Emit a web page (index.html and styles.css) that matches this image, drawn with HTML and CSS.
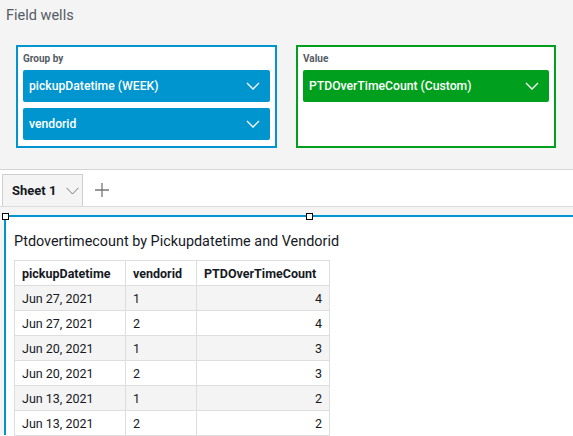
FILE: index.html
```html
<!DOCTYPE html>
<html>
<head>
<meta charset="utf-8">
<link rel="stylesheet" href="styles.css">
</head>
<body>
<div class="wells">
  <div class="wells-title">Field wells</div>
  <div class="wells-row">
    <div class="well well-blue">
      <div class="well-label">Group by</div>
      <div class="pill pill-blue"><span>pickupDatetime (WEEK)</span><svg class="chev" width="14" height="8" viewBox="0 0 14 8"><path d="M1 1 L7 7 L13 1" fill="none" stroke="#fff" stroke-width="1.3"/></svg></div>
      <div class="pill pill-blue"><span>vendorid</span><svg class="chev" width="14" height="8" viewBox="0 0 14 8"><path d="M1 1 L7 7 L13 1" fill="none" stroke="#fff" stroke-width="1.3"/></svg></div>
    </div>
    <div class="well well-green">
      <div class="well-label">Value</div>
      <div class="pill pill-green"><span>PTDOverTimeCount (Custom)</span><svg class="chev" width="14" height="8" viewBox="0 0 14 8"><path d="M1 1 L7 7 L13 1" fill="none" stroke="#fff" stroke-width="1.3"/></svg></div>
    </div>
  </div>
</div>
<div class="tabbar">
  <div class="tab"><span>Sheet 1</span><svg class="tab-chev" width="13" height="8" viewBox="0 0 13 8"><path d="M0.5 0.8 L6.5 7 L12.5 0.8" fill="none" stroke="#777" stroke-width="1"/></svg></div>
  <svg class="plus" width="14" height="14" viewBox="0 0 14 14"><path d="M7 0 V14 M0 7 H14" stroke="#777" stroke-width="1.3"/></svg>
</div>
<div class="canvas">
  <div class="visual">
    <span class="handle handle-l"></span>
    <span class="handle handle-m"></span>
    <div class="visual-title">Ptdovertimecount by Pickupdatetime and Vendorid</div>
    <table class="grid">
      <colgroup><col class="c1"><col class="c2"><col class="c3"></colgroup>
      <thead>
        <tr><th>pickupDatetime</th><th>vendorid</th><th>PTDOverTimeCount</th></tr>
      </thead>
      <tbody>
        <tr><td>Jun 27, 2021</td><td>1</td><td class="num">4</td></tr>
        <tr><td>Jun 27, 2021</td><td>2</td><td class="num">4</td></tr>
        <tr><td>Jun 20, 2021</td><td>1</td><td class="num">3</td></tr>
        <tr><td>Jun 20, 2021</td><td>2</td><td class="num">3</td></tr>
        <tr><td>Jun 13, 2021</td><td>1</td><td class="num">2</td></tr>
        <tr><td>Jun 13, 2021</td><td>2</td><td class="num">2</td></tr>
      </tbody>
    </table>
  </div>
</div>
</body>
</html>
```
FILE: styles.css
```css
* { box-sizing: border-box; }
html, body {
  margin: 0;
  padding: 0;
  width: 573px;
  height: 436px;
  overflow: hidden;
  background: #fff;
  font-family: Roboto, "Noto Sans", sans-serif;
  color: #16191f;
}
.wells {
  background: #f4f4f4;
  height: 170px;
  border-bottom: 1px solid #d5d5d5;
  padding-top: 5px;
}
.wells-title {
  font-size: 14.5px;
  line-height: 22px;
  color: #545b64;
  padding-left: 6px;
}
.wells-row {
  display: flex;
  gap: 19px;
  padding-left: 16px;
  margin-top: 18px;
}
.well {
  width: 261px;
  height: 103px;
  background: #fff;
  border: 2px solid;
  padding: 5px;
  display: flex;
  flex-direction: column;
  gap: 6px;
}
.well-green { width: 260px; border-color: #00a01e; }
.well-blue { border-color: #0095cf; }
.well-label {
  font-size: 10px;
  font-weight: 700;
  line-height: 13px;
  color: #545b64;
  margin-bottom: -1px;
}
.pill {
  height: 32px;
  border-radius: 2px;
  display: flex;
  align-items: center;
  justify-content: space-between;
  padding: 0 10px 0 6px;
  color: #fff;
  font-size: 12.2px;
  font-weight: 500;
}
.pill-blue { background: #0095cf; }
.pill-green { background: #00a01e; }
.chev { display: block; }
.tabbar {
  height: 37px;
  background: #fff;
  display: flex;
  align-items: flex-end;
  gap: 12px;
  padding-left: 2px;
  border-bottom: 1px solid #dcdcdc;
}
.tab {
  width: 81px;
  height: 32px;
  background: #f4f4f4;
  border: 1px solid #cfcfcf;
  border-bottom: none;
  display: flex;
  align-items: center;
  padding-left: 9px;
  gap: 10px;
  font-size: 13px;
  font-weight: 700;
  color: #16191f;
}
.tab-chev { display: block; }
.plus { display: block; margin-bottom: 9px; }
.canvas {
  background: #f4f4f4;
  padding-top: 8px;
  padding-left: 4px;
  height: 228px;
}
.visual {
  position: relative;
  background: #fff;
  border-top: 2px solid #0095cf;
  border-left: 2px solid #0095cf;
  height: 220px;
  padding: 15px 0 0 8px;
}
.handle {
  position: absolute;
  width: 7px;
  height: 7px;
  background: #fff;
  border: 1px solid #000;
  top: -4px;
}
.handle-l { left: -4px; }
.handle-m { left: 300px; }
.visual-title {
  font-size: 14.4px;
  line-height: 20px;
  color: #16191f;
  margin-bottom: 8px;
}
.grid {
  border-collapse: collapse;
  table-layout: fixed;
  width: 315px;
  font-size: 12.5px;
  color: #16191f;
}
.grid col.c1 { width: 111px; }
.grid col.c2 { width: 71px; }
.grid col.c3 { width: 133px; }
.grid th, .grid td {
  border: 1px solid #dedede;
  height: 25px;
  padding: 0 7px;
  text-align: left;
  white-space: nowrap;
  overflow: hidden;
}
.grid th { font-weight: 700; background: #fff; }
.grid tbody tr:nth-child(odd) td { background: #f4f4f4; }
.grid td.num { text-align: right; }
```
